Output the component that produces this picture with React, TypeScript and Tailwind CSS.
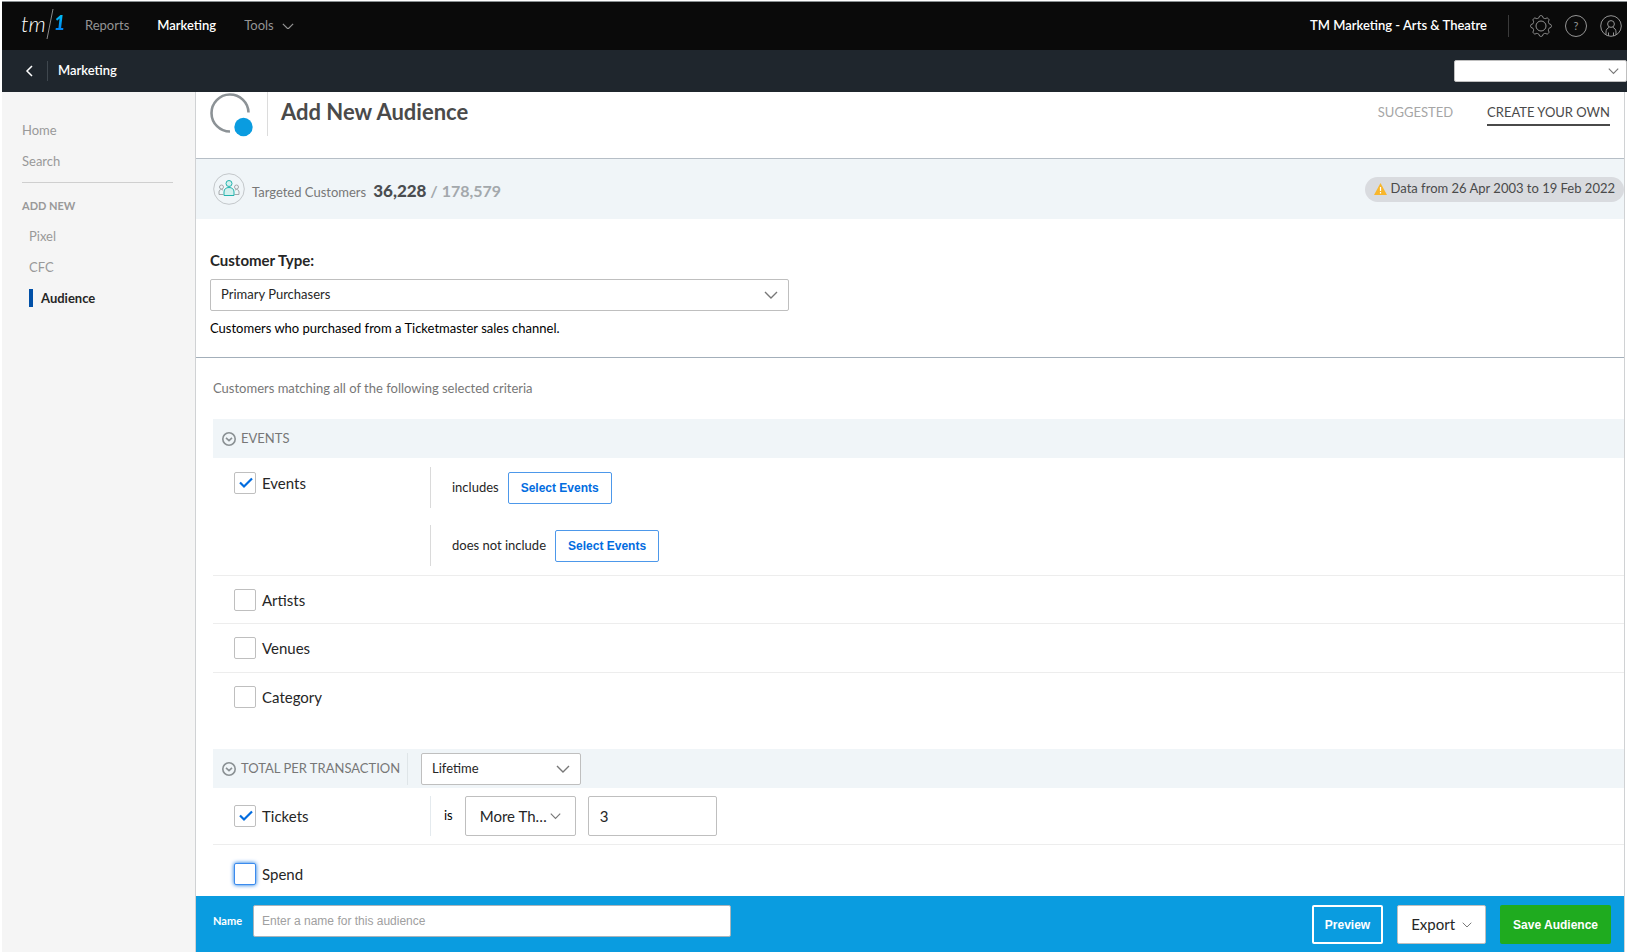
import type { ReactNode } from "react";

function Chevron({ className }: { className: string }) {
  return (
    <svg className={className} viewBox="0 0 14 8" fill="none" stroke="currentColor" strokeWidth="1.4">
      <path d="M1 1l6 6 6-6" />
    </svg>
  );
}

function TeamLogo() {
  return (
    <a href="#" aria-label="tm1 home" className="flex w-[64px] items-center pb-[5px]">
      <span className="text-[22px] leading-8 font-light italic text-white">tm</span>
      <svg className="h-8 w-[8px]" viewBox="0 0 8 32" fill="none" stroke="#8a8a8a">
        <path d="M7 1L1 31" />
      </svg>
      <span className="bg-linear-to-b from-[#00d0f5] to-[#0a62f0] bg-clip-text pr-[2px] pb-[3px] text-[20px] leading-6 font-black italic text-transparent">1</span>
    </a>
  );
}

// eight soft teeth around the hub
const gearPoints = Array.from({ length: 96 }, (_, i) => {
  const a = (i / 96) * Math.PI * 2;
  const r = 9.3 + 1.1 * Math.tanh(2 * Math.cos(8 * a));
  return `${(11 + r * Math.sin(a)).toFixed(2)},${(11 - r * Math.cos(a)).toFixed(2)}`;
}).join(" ");

function GearIcon() {
  return (
    <svg className="size-[22px]" viewBox="0 0 22 22" fill="none" stroke="currentColor" strokeLinejoin="round">
      <polygon points={gearPoints} />
      <circle cx="11" cy="11" r="5" />
    </svg>
  );
}

function UserIcon() {
  return (
    <svg className="size-[22px]" viewBox="0 0 22 22" fill="none" stroke="currentColor">
      <circle cx="11" cy="11" r="10.3" />
      <circle cx="11" cy="9" r="3.4" />
      <path d="M6 20v-3c0-2.500 1.500-4 3.300-4.700M16 20v-3c0-2.500-1.500-4-3.300-4.700M8.500 21v-3.500M13.500 21v-3.500" />
    </svg>
  );
}

function AudienceIcon() {
  return (
    <svg className="size-8" viewBox="0 0 32 32" fill="none">
      <circle cx="16" cy="16" r="15.3" stroke="#c3c7ca" />
      <g stroke="#a4a8ab">
        <circle cx="8.500" cy="14" r="2" />
        <path d="M10.500 21.500H6v-2.500c0-1.500 1-2.500 2.500-2.500l1.500.5" />
        <circle cx="23.500" cy="14" r="2" />
        <path d="M21.500 21.500H26v-2.500c0-1.500-1-2.500-2.500-2.500l-1.500.5" />
      </g>
      <g stroke="#22b3ae" fill="#d3f0ee">
        <circle cx="16" cy="10.500" r="3" />
        <path d="M11 22.500V19c0-3 2-4.500 5-4.500s5 1.500 5 4.500v3.500z" />
      </g>
    </svg>
  );
}

function Select({ label, value, className, arrow }: { label: string; value: string; className: string; arrow: string }) {
  return (
    <div className="relative flex items-center">
      <select aria-label={label} className={`appearance-none rounded-[2px] border border-[#bfbfbf] bg-white text-[#262626] ${className}`}>
        <option>{value}</option>
      </select>
      <Chevron className={`pointer-events-none absolute h-2 text-[#777] ${arrow}`} />
    </div>
  );
}

function Check({ label, checked, focused }: { label: string; checked?: boolean; focused?: boolean }) {
  return (
    <label className="flex w-[196px] items-center gap-[6px] text-[15px] leading-5 text-[#262626]">
      <span className="relative flex size-[22px]">
        <input
          type="checkbox"
          defaultChecked={checked}
          className={`peer size-[22px] appearance-none rounded-[2px] border bg-white ${focused ? "border-[#3b8bee] shadow-[0_0_4px_#026cdf]" : "border-[#bfbfbf]"}`}
        />
        <svg className="pointer-events-none absolute inset-0 hidden peer-checked:block" viewBox="0 0 22 22" fill="none" stroke="#026cdf" strokeWidth="2.2">
          <path d="M6 10.500l4 4 8-8" />
        </svg>
      </span>
      {label}
    </label>
  );
}

function SectionHeader({ title, children }: { title: string; children?: ReactNode }) {
  return (
    <div className="flex h-[39px] items-center bg-[#f0f5f8] pl-[9px]">
      <button className="flex w-[185px] items-center gap-[5px] text-[13px] whitespace-nowrap text-[#777]">
        <svg className="size-[14px] shrink-0" viewBox="0 0 14 14" fill="none" stroke="#8a9093" strokeWidth="1.6">
          <circle cx="7" cy="7" r="6.2" />
          <path d="M4 5.800l3 2.800 3-2.800" />
        </svg>
        {title}
      </button>
      {children}
    </div>
  );
}

function EventRule({ text }: { text: string }) {
  return (
    <div className="flex h-[41px] items-center gap-[9px] border-l border-[#dadada] pl-[21px] text-[13px] text-[#262626]">
      {text}
      <button className="h-8 rounded-[2px] border border-[#4d98ea] px-3 font-['Liberation_Sans',sans-serif] text-[12px] font-bold text-[#026cdf]">
        Select Events
      </button>
    </div>
  );
}

export default function App() {
  return (
    <div className="flex min-h-screen flex-col bg-white pl-[2px] font-['Lato',sans-serif] text-[13px]">
      <header className="mt-px flex h-[49px] items-center border-t border-[#8b9193] bg-[#0a0a0a] pr-[5px] pl-[19px] text-[#949494]">
        <TeamLogo />
        <nav className="flex items-center gap-7">
          <a href="#">Reports</a>
          <a href="#" className="font-semibold text-white">Marketing</a>
          <a href="#" className="flex items-center gap-2">
            Tools
            <Chevron className="w-[12px]" />
          </a>
        </nav>
        <span className="ml-auto font-semibold text-white">TM Marketing - Arts &amp; Theatre</span>
        <div className="ml-[21px] flex items-center gap-[13px] border-l border-[#3a3a3a] pl-[21px]">
          <button aria-label="Settings"><GearIcon /></button>
          <button aria-label="Help" className="size-[22px] rounded-full border border-[#949494] text-[11px]">?</button>
          <button aria-label="Account"><UserIcon /></button>
        </div>
      </header>

      <div className="flex h-[42px] items-center justify-between bg-[#1f262d] pl-[23px] text-white">
        <div className="flex items-center">
          <button aria-label="Back" className="w-[22px]">
            <svg className="h-3 w-2" viewBox="0 0 8 12" fill="none" stroke="currentColor" strokeWidth="1.5">
              <path d="M7 1L2 6l5 5" />
            </svg>
          </button>
          <span className="border-l border-[#3f474e] pl-[10px] font-semibold">Marketing</span>
        </div>
        <Select label="Venue" value="" className="h-[22px] w-[173px]" arrow="right-[8px] w-[11px]" />
      </div>

      <div className="flex flex-1">
        <aside className="w-[193px] shrink-0 bg-[#f5f5f5] pt-[28px] pr-[22px] pl-5 text-[#999]">
          <nav className="flex flex-col">
            <a href="#" className="leading-5">Home</a>
            <a href="#" className="mt-[11px] leading-5">Search</a>
            <hr className="mt-[11px] border-[#cfcfcf]" />
            <h2 className="mt-[13px] text-[11px] leading-5 font-bold">ADD NEW</h2>
            <a href="#" className="mt-[10px] ml-[7px] leading-5">Pixel</a>
            <a href="#" className="mt-[11px] ml-[7px] leading-5">CFC</a>
            <a href="#" className="mt-[12px] ml-[7px] border-l-4 border-[#0150a7] pl-[8px] leading-[18px] font-bold text-[#262626]">Audience</a>
          </nav>
        </aside>

        <main className="mr-[2px] flex min-w-0 flex-1 flex-col border-x border-[#d0d2d4]">
          <div className="flex h-[67px] items-start border-b border-[#b6bec6] pr-[14px] pl-[13px]">
            <svg className="h-[45px] w-[58px]" viewBox="0 0 58 45" fill="none">
              <path d="M39.500 20.500A18.500 18.500 0 1 0 21 39.500" stroke="#8c9296" strokeWidth="2.6" />
              <circle cx="34.500" cy="35" r="9.200" fill="#0a9ce0" />
            </svg>
            <div className="flex h-[44px] border-l border-[#dcdcdc] pl-[13px]">
              <h1 className="pt-[6px] text-[22px] leading-7 font-bold text-[#4a4a4a]">Add New Audience</h1>
            </div>
            <nav className="mt-[9px] ml-auto flex gap-[34px] text-[13px] leading-[23px]">
              <a href="#" className="text-[#a6a6a6]">SUGGESTED</a>
              <a href="#" className="border-b-2 border-[#4a4a4a] text-[#4a4a4a]">CREATE YOUR OWN</a>
            </nav>
          </div>

          <div className="flex h-[60px] items-center justify-between bg-[#f0f5f8] pl-[17px]">
            <div className="flex items-center gap-[7px] text-[#777]">
              <AudienceIcon />
              <p className="flex items-baseline gap-[7px] pt-[3px]">
                Targeted Customers
                <span className="text-[16px] font-bold text-[#a3a8ac]">
                  <b className="text-[17px] text-[#4a4d50]">36,228</b> / 178,579
                </span>
              </p>
            </div>
            <p className="flex h-[25px] items-center gap-1 rounded-full bg-[#d9dbdf] px-[9px] text-[13px] text-[#4a4a4a]">
              <svg className="h-3 w-[13px]" viewBox="0 0 13 12">
                <path d="M6.500 0L13 12H0z" fill="#f8b62b" />
                <path d="M6.500 4v4M6.500 9v1.500" stroke="#fff" strokeWidth="1.2" />
              </svg>
              Data from 26 Apr 2003 to 19 Feb 2022
            </p>
          </div>

          <section className="border-b border-[#a3afba] px-[14px] pt-[31px] pb-[19px]">
            <h2 className="text-[15px] leading-5 font-bold text-[#262626]">Customer Type:</h2>
            <div className="mt-[9px] flex">
              <Select label="Customer Type" value="Primary Purchasers" className="h-8 w-[579px] px-[10px]" arrow="right-[11px] w-[14px]" />
            </div>
            <p className="mt-[7px] leading-5 text-black">Customers who purchased from a Ticketmaster sales channel.</p>
          </section>

          <section className="flex-1 pl-[17px]">
            <p className="mt-5 mb-[21px] leading-5 text-[#777]">Customers matching all of the following selected criteria</p>
            <SectionHeader title="EVENTS" />
            <div className="flex items-start border-b border-[#ededed] px-[21px] py-[9px]">
              <div className="mt-[5px]"><Check label="Events" checked /></div>
              <div className="flex flex-col gap-[17px]">
                <EventRule text="includes" />
                <EventRule text="does not include" />
              </div>
            </div>
            <div className="flex h-12 items-center border-b border-[#ededed] px-[21px]"><Check label="Artists" /></div>
            <div className="flex h-[49px] items-center border-b border-[#ededed] px-[21px]"><Check label="Venues" /></div>
            <div className="flex h-12 items-center px-[21px]"><Check label="Category" /></div>

            <div className="mt-[28px]">
              <SectionHeader title="TOTAL PER TRANSACTION">
                <div className="border-l border-[#dfe5e8] pl-[13px]">
                  <Select label="Transaction period" value="Lifetime" className="h-8 w-[160px] px-[10px]" arrow="right-[11px] w-[14px]" />
                </div>
              </SectionHeader>
            </div>
            <div className="flex h-[57px] items-center border-b border-[#ededed] px-[21px]">
              <Check label="Tickets" checked />
              <div className="flex h-[40px] items-center gap-3 border-l border-[#e4eaee] pl-[13px]">
                <span>is</span>
                <Select label="Tickets comparison" value="More Th…" className="h-[40px] w-[111px] pl-[14px] text-[15px]" arrow="right-[15px] w-[11px]" />
                <input aria-label="Tickets amount" defaultValue="3" className="h-[40px] w-[129px] rounded-[2px] border border-[#bfbfbf] px-[11px] text-[15px] text-[#262626]" />
              </div>
            </div>
            <div className="flex h-[51px] items-center px-[21px] pt-[7px]"><Check label="Spend" focused /></div>
          </section>

          <footer className="flex h-14 items-start bg-[#0a9ce0] pt-[9px] pr-[13px] pl-[17px]">
            <label htmlFor="audience-name" className="w-10 text-[11px] leading-8 font-bold text-white">Name</label>
            <input id="audience-name" placeholder="Enter a name for this audience" className="h-8 w-[478px] rounded-[2px] border border-[#a9b4bb] bg-white px-[8px] font-['Liberation_Sans',sans-serif] text-[12px] placeholder:text-[#a0a0a0]" />
            <div className="ml-auto flex gap-[14px] font-['Liberation_Sans',sans-serif] text-[12px] font-bold text-white">
              <button className="h-[39px] rounded-[2px] border-2 border-white px-[11px]">Preview</button>
              <button className="flex h-[39px] items-center gap-[7px] rounded-[2px] border border-[#bfbfbf] bg-white px-[13px] font-['Lato',sans-serif] text-[15px] font-normal text-[#262626]">
                Export
                <Chevron className="w-[10px] text-[#777]" />
              </button>
              <button className="h-[39px] rounded-[2px] bg-[#1fab1f] px-[13px]">Save Audience</button>
            </div>
          </footer>
        </main>
      </div>
    </div>
  );
}
